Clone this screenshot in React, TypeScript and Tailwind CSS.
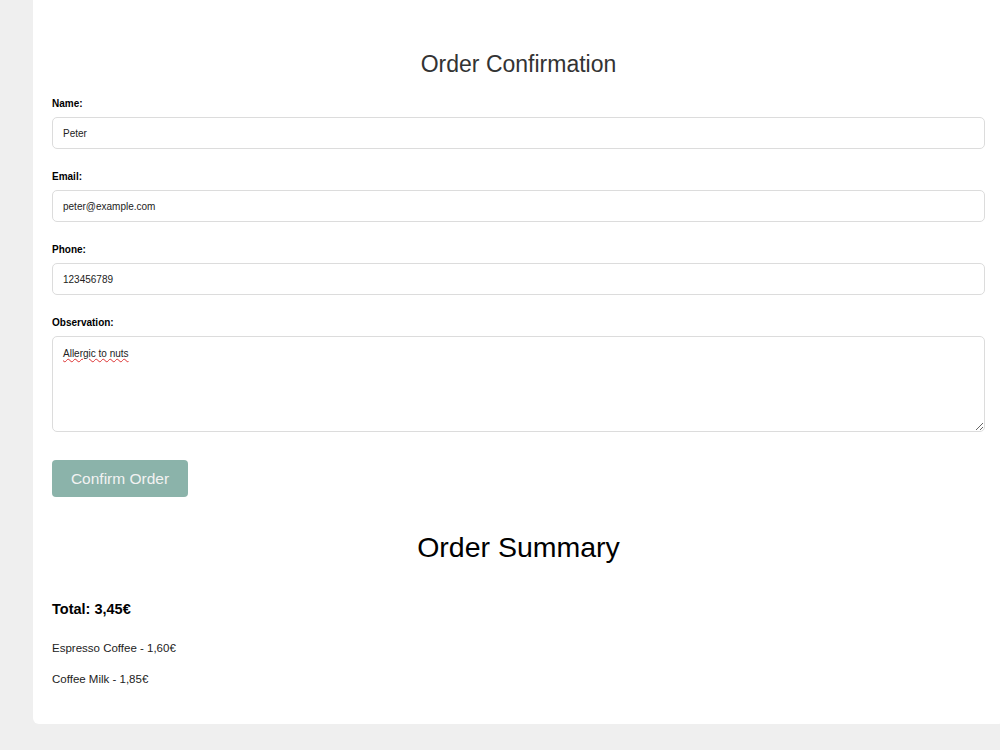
import React from 'react';

export default function App() {
    const fields = [
        { label: 'Name:', value: 'Peter' },
        { label: 'Email:', value: 'peter@example.com' },
        { label: 'Phone:', value: '123456789' },
    ];

    return (
        <div className="h-[750px] overflow-hidden bg-[#efefef] pl-[33px] font-['Liberation_Sans',Arial,sans-serif]">
            <div className="w-[971px] rounded-b-[6px] bg-white px-[19px] pt-[50px] pb-[39px]">
                {/* Form */}
                <h2 className="mb-[20px] text-center text-[23px] leading-[28px] text-[#333]">Order Confirmation</h2>

                {fields.map((f) => (
                    <div key={f.label} className="mb-[22px]">
                        <label className="mb-[7px] block text-[10px] font-bold leading-[12px] text-black">{f.label}</label>
                        <input
                            type="text"
                            defaultValue={f.value}
                            className="block h-[32px] w-full rounded-[5px] border border-[#dcdcdc] px-[10px] text-[10px] text-[#222] outline-none"
                        />
                    </div>
                ))}

                <div className="mb-[28px]">
                    <label className="mb-[7px] block text-[10px] font-bold leading-[12px] text-black">Observation:</label>
                    <textarea
                        defaultValue="Allergic to nuts"
                        className="block h-[96px] w-full rounded-[5px] border border-[#dcdcdc] px-[10px] py-[9px] text-[10px] text-[#222] underline decoration-wavy decoration-[#d33] outline-none"
                    />
                </div>

                <button className="h-[37px] w-[136px] rounded-[4px] bg-[#8bb3aa] text-[15.5px] text-[#f2f2f2]">
                    Confirm Order
                </button>

                {/* Summary */}
                <h2 className="mt-[33px] text-center text-[28.5px] leading-[34px] text-black">Order Summary</h2>

                <p className="mt-[36px] text-[14.5px] font-bold leading-[18px] text-black">Total: 3,45€</p>
                <ul className="mt-[24px] space-y-[19px] text-[11.5px] leading-[12px] text-[#222]">
                    <li>Espresso Coffee - 1,60€</li>
                    <li>Coffee Milk - 1,85€</li>
                </ul>
            </div>
        </div>
    );
}
